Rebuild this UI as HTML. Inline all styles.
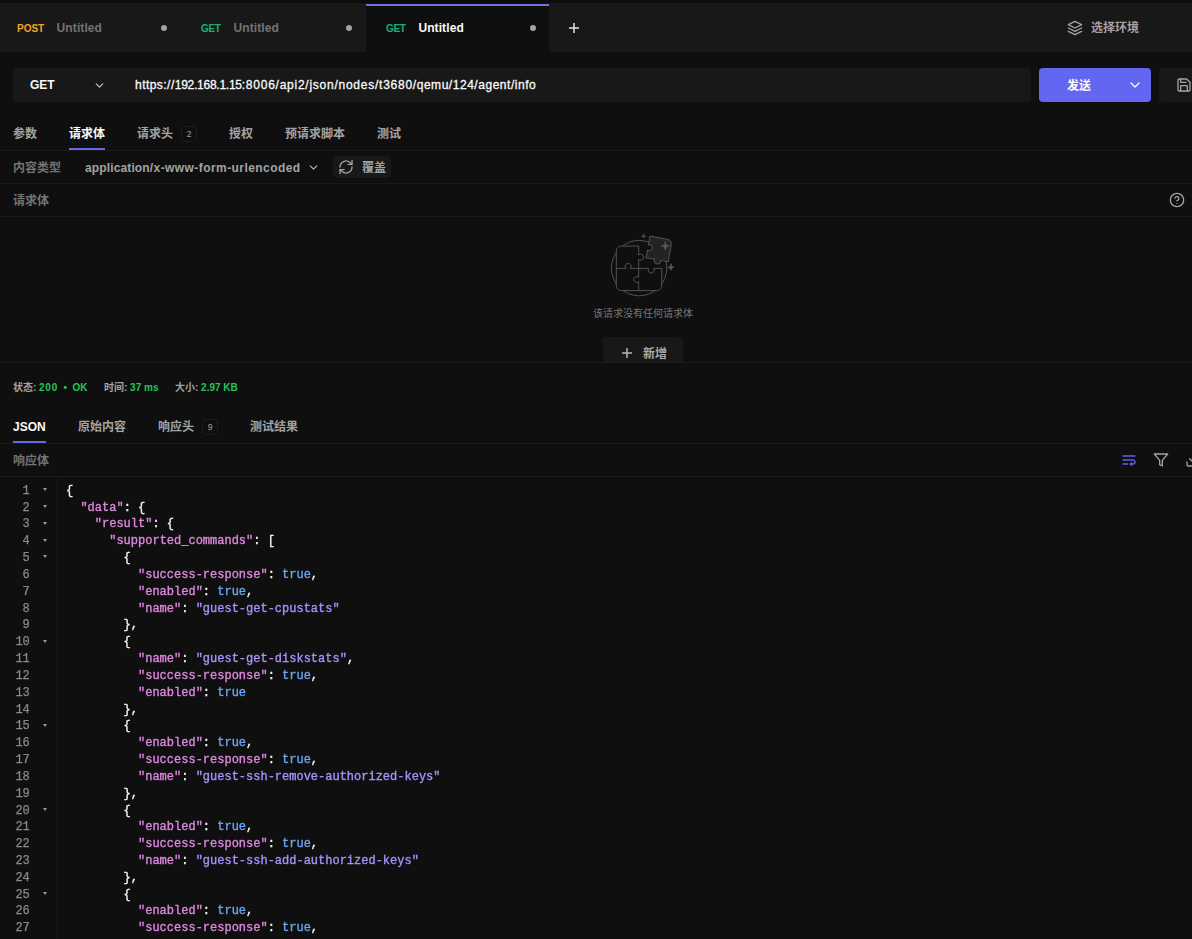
<!DOCTYPE html>
<html lang="zh-CN">
<head>
<meta charset="utf-8">
<title>Hoppscotch</title>
<style>
*{box-sizing:border-box;margin:0;padding:0}
html,body{width:1192px;height:939px;overflow:hidden;background:#0f0f0f}
body{position:relative;font-family:"Liberation Sans","Noto Sans CJK SC",sans-serif;font-size:12px;color:#a3a3a3;-webkit-font-smoothing:antialiased}
.abs{position:absolute;white-space:nowrap}
.t{position:absolute;white-space:nowrap;line-height:16px;height:16px}
.hl{position:absolute;left:0;width:1192px;height:1px;background:#1a1a1a}
.b{font-weight:700}
.m{font-weight:500}
.w{color:#fafafa}
.dim{color:#737373}
svg{position:absolute;overflow:visible}
/* top */
#topstrip{left:0;top:0;width:1192px;height:3px;background:#0c0c0c}
#tabbar{left:0;top:3px;width:1192px;height:49px;background:#181818}
#acttab{left:366px;top:3px;width:183px;height:49px;background:#0f0f0f}
#actline{left:366px;top:4px;width:183px;height:2px;background:#6f72dc}
.dot{position:absolute;width:6px;height:6px;border-radius:50%;background:#a3a3a3;top:25px}
.meth{font-size:10px;font-weight:700;top:21px}
.get{color:#1fae7b;letter-spacing:-.3px}
.tname{font-size:12px;font-weight:700;top:20px;color:#737373;letter-spacing:.1px}
.tname.w{color:#fafafa}
/* url row */
#urlbox{left:13px;top:68px;width:1018px;height:34px;background:#181818;border-radius:4px}
#send{left:1039px;top:68px;width:112px;height:34px;background:#6366f1;border-radius:4px}
#save{left:1159px;top:68px;width:60px;height:34px;background:#181818;border-radius:4px}
/* code */
#code{left:0;top:477px;width:1192px;height:462px;background:#0f0f0f;overflow:hidden}
#gutline{left:57px;top:477px;width:1px;height:462px;background:#1a1a1a}
#codewrap{position:absolute;left:0;top:0;width:1192px;height:939px;will-change:transform;pointer-events:none}
.ln,.cl{position:absolute;font-family:"Liberation Mono",monospace;font-size:12px;line-height:16.8px;height:16.8px;white-space:pre}
.ln{left:0;width:29.8px;text-align:right;color:#8a8a8a;-webkit-text-stroke:.25px #8a8a8a}
.cl{left:66px;color:#f0f0f0;-webkit-text-stroke:.35px}
.k{color:#dd88de}
.s{color:#a990fb}
.v{color:#6aa6ee}
.fold{position:absolute;left:42.6px;width:0;height:0;border-left:2.4px solid transparent;border-right:2.4px solid transparent;border-top:3.4px solid #999}
</style>
</head>
<body>
<div class="abs" id="topstrip"></div>
<div class="abs" id="tabbar"></div>
<div class="abs" id="acttab"></div>
<div class="abs" id="actline"></div>

<!-- request tabs -->
<div class="t meth" style="left:17px;color:#efa920">POST</div>
<div class="t tname" style="left:56.6px">Untitled</div>
<div class="dot" style="left:161px"></div>
<div class="t meth get" style="left:201px">GET</div>
<div class="t tname" style="left:233.5px">Untitled</div>
<div class="dot" style="left:346px"></div>
<div class="t meth get" style="left:386px">GET</div>
<div class="t tname w" style="left:418.4px">Untitled</div>
<div class="dot" style="left:530px"></div>
<svg id="plus" style="left:568px;top:22px" width="12" height="12" viewBox="0 0 12 12"><path d="M6 1v10M1 6h10" stroke="#e5e5e5" stroke-width="1.5" fill="none"/></svg>

<!-- environment -->
<svg id="layers" style="left:1067px;top:20px" width="16" height="16" viewBox="0 0 24 24" fill="none" stroke="#a3a3a3" stroke-width="2" stroke-linecap="round" stroke-linejoin="round"><path d="M12 2 2 7l10 5 10-5-10-5z"/><path d="m2 12 10 5 10-5"/><path d="m2 17 10 5 10-5"/></svg>
<div class="t b" style="left:1091px;top:20px">选择环境</div>

<!-- url row -->
<div class="abs" id="urlbox"></div>
<div class="t b w" id="urlmeth" style="left:30px;top:77px">GET</div>
<svg id="chev1" style="left:92.7px;top:78.5px" width="13" height="13" viewBox="0 0 24 24" fill="none" stroke="#c4c4c4" stroke-width="2.2" stroke-linecap="round" stroke-linejoin="round"><path d="m6 9 6 6 6-6"/></svg>
<div class="t w" id="url" style="left:135px;top:77px;letter-spacing:.46px;-webkit-text-stroke:.3px #fafafa">https://<span style="letter-spacing:-.25px">192.168.1.15</span><span style="letter-spacing:.75px">:8006/api2/json/nodes/t3680</span><span style="letter-spacing:.535px">/qemu/124/agent/info</span></div>
<div class="abs" id="send"></div>
<div class="t b w" id="sendtxt" style="left:1067px;top:78px">发送</div>
<svg id="chev2" style="left:1126.5px;top:77px" width="16" height="16" viewBox="0 0 24 24" fill="none" stroke="#fafafa" stroke-width="2" stroke-linecap="round" stroke-linejoin="round"><path d="m6 9 6 6 6-6"/></svg>
<div class="abs" id="save"></div>
<svg id="saveic" style="left:1176px;top:77px" width="16" height="16" viewBox="0 0 24 24" fill="none" stroke="#a3a3a3" stroke-width="2" stroke-linecap="round" stroke-linejoin="round"><path d="M19 21H5a2 2 0 0 1-2-2V5a2 2 0 0 1 2-2h11l5 5v11a2 2 0 0 1-2 2z"/><path d="M17 21v-8H7v8"/><path d="M7 3v5h8"/></svg>

<!-- request sub tabs -->
<div class="t b" style="left:13px;top:126px">参数</div>
<div class="t b w" style="left:69px;top:126px">请求体</div>
<div class="abs" style="left:69px;top:148px;width:36px;height:2px;background:#6669e4"></div>
<div class="t b" style="left:137px;top:126px">请求头</div>
<div class="abs" id="badge1" style="left:181px;top:126px;width:16px;height:16px;border:1px solid #1d1d1d;border-radius:4px"></div>
<div class="t" style="left:181px;top:126px;width:16px;text-align:center;font-size:8.5px;color:#a3a3a3">2</div>
<div class="t b" style="left:229px;top:126px">授权</div>
<div class="t b" style="left:285px;top:126px">预请求脚本</div>
<div class="t b" style="left:377px;top:126px">测试</div>
<div class="hl" style="top:150px"></div>

<!-- content type row -->
<div class="t b dim" style="left:13px;top:160px">内容类型</div>
<div class="t b" id="ctype" style="left:85px;top:160px;letter-spacing:.43px"><span style="letter-spacing:.13px">application</span>/x-www-form-urlencoded</div>
<svg id="chev3" style="left:307px;top:160.8px" width="13" height="13" viewBox="0 0 24 24" fill="none" stroke="#b4b4b4" stroke-width="2.2" stroke-linecap="round" stroke-linejoin="round"><path d="m6 9 6 6 6-6"/></svg>
<div class="abs" id="override" style="left:333px;top:156px;width:58px;height:22px;background:#181818;border-radius:4px"></div>
<svg id="refresh" style="left:338px;top:159px" width="16" height="16" viewBox="0 0 24 24" fill="none" stroke="#a3a3a3" stroke-width="2" stroke-linecap="round" stroke-linejoin="round"><path d="M21 2v6h-6"/><path d="M3 12a9 9 0 0 1 15-6.7L21 8"/><path d="M3 22v-6h6"/><path d="M21 12a9 9 0 0 1-15 6.7L3 16"/></svg>
<div class="t b" style="left:362px;top:160px">覆盖</div>
<div class="hl" style="top:183px"></div>

<!-- body label row -->
<div class="t b dim" style="left:13px;top:193px">请求体</div>
<svg id="help" style="left:1169px;top:192px" width="16" height="16" viewBox="0 0 24 24" fill="none" stroke="#a3a3a3" stroke-width="2" stroke-linecap="round" stroke-linejoin="round"><circle cx="12" cy="12" r="10"/><path d="M9.09 9a3 3 0 0 1 5.83 1c0 2-3 3-3 3"/><path d="M12 17h.01"/></svg>
<div class="hl" style="top:216px"></div>

<!-- empty state -->
<svg id="puzzle" style="left:592px;top:225px" width="100" height="80" viewBox="0 0 100 80" fill="none" stroke="#525252" stroke-width="1" stroke-linejoin="round" stroke-linecap="round">
<circle cx="47.1" cy="43.1" r="27.7"/>
<path d="M46.7 21.1H29.3a5 5 0 0 0-5 5V60.6a5 5 0 0 0 5 5H64.8a5 5 0 0 0 5-5V43.4H61.7A3 3 0 1 1 56.7 43.4H46.7" fill="#0f0f0f"/>
<path d="M46.7 21.1V29.9A3 3 0 1 1 46.7 34.3V52.3A3 3 0 1 0 46.7 56.7V65.6"/>
<path d="M24.3 43.4H34A3 3 0 1 1 38.4 43.4H46.7"/>
<g transform="translate(57.9 11.1) rotate(10)"><path d="M0 0H17.5a5 5 0 0 1 5 5V22H15A3.3 3.3 0 1 1 8.6 22H0V14.2A3 3 0 1 0 0 8.8Z" fill="#232323"/></g>
<path d="M73.3 16.9Q73.3 20.9 77.3 20.9Q73.3 20.9 73.3 24.9Q73.3 20.9 69.3 20.9Q73.3 20.9 73.3 16.9Z" fill="#5a5a5a" stroke="#5a5a5a" stroke-width=".8"/>
<path d="M79 39.2Q79 42.2 82 42.2Q79 42.2 79 45.2Q79 42.2 76 42.2Q79 42.2 79 39.2Z" fill="#5a5a5a" stroke="#5a5a5a" stroke-width=".8"/>
<path d="M51.7 9.2Q51.7 11.2 53.7 11.2Q51.7 11.2 51.7 13.2Q51.7 11.2 49.7 11.2Q51.7 11.2 51.7 9.2Z" fill="#5a5a5a" stroke="#5a5a5a" stroke-width=".5"/>
</svg>
<div class="t" style="left:543px;top:306px;width:200px;text-align:center;font-size:10px;color:#777">该请求没有任何请求体</div>
<div class="abs" id="addbtn" style="left:603px;top:337px;width:80px;height:26px;background:#181818;border-radius:4px 4px 0 0"></div>
<svg id="plus2" style="left:621px;top:347px" width="12" height="12" viewBox="0 0 12 12"><path d="M6 1v10M1 6h10" stroke="#b8b8b8" stroke-width="1.5" fill="none"/></svg>
<div class="t b" style="left:643px;top:346px;color:#ababab">新增</div>
<div class="hl" style="top:362px;background:#1a1a1a"></div>

<!-- status -->
<div class="t b" id="status" style="left:13px;top:380px;font-size:10px">状态: <span style="color:#22c55e"><span style="letter-spacing:.7px">200</span> &nbsp;•&nbsp; OK</span></div>
<div class="t b" id="time" style="left:104px;top:380px;font-size:10px">时间: <span style="color:#22c55e">37 ms</span></div>
<div class="t b" id="size" style="left:175px;top:380px;font-size:10px">大小: <span style="color:#22c55e">2.97 KB</span></div>

<!-- response tabs -->
<div class="t b w" style="left:13px;top:419px">JSON</div>
<div class="abs" style="left:13px;top:441px;width:33px;height:2px;background:#6669e4"></div>
<div class="t b" style="left:78px;top:419px">原始内容</div>
<div class="t b" style="left:158px;top:419px">响应头</div>
<div class="abs" id="badge2" style="left:202px;top:419px;width:16px;height:16px;border:1px solid #1d1d1d;border-radius:4px"></div>
<div class="t" style="left:202px;top:419px;width:16px;text-align:center;font-size:8.5px;color:#a3a3a3">9</div>
<div class="t b" style="left:250px;top:419px">测试结果</div>
<div class="hl" style="top:443px"></div>

<div class="t b dim" style="left:13px;top:453px">响应体</div>
<svg id="wrapic" style="left:1121px;top:452px" width="16" height="16" viewBox="0 0 24 24" fill="none" stroke="#5d60e4" stroke-width="2" stroke-linecap="round" stroke-linejoin="round"><path d="M3 6h18"/><path d="M3 12h15a3 3 0 1 1 0 6h-4"/><path d="m16 16-2 2 2 2"/><path d="M3 18h7"/></svg>
<svg id="filteric" style="left:1153px;top:452px" width="16" height="16" viewBox="0 0 24 24" fill="none" stroke="#a3a3a3" stroke-width="2" stroke-linecap="round" stroke-linejoin="round"><path d="M22 3H2l8 9.46V19l4 2v-8.54L22 3z"/></svg>
<svg id="dlic" style="left:1185px;top:452px" width="16" height="16" viewBox="0 0 24 24" fill="none" stroke="#a3a3a3" stroke-width="2" stroke-linecap="round" stroke-linejoin="round"><path d="M21 15v4a2 2 0 0 1-2 2H5a2 2 0 0 1-2-2v-4"/><path d="m7 10 5 5 5-5"/><path d="M12 15V3"/></svg>
<div class="hl" style="top:476px"></div>

<div class="abs" id="gutline"></div>
<div id="codewrap">
<div class="ln" style="top:482.7px">1</div>
<div class="fold" style="top:488.1px"></div>
<div class="cl" style="top:482.7px">{</div>
<div class="ln" style="top:499.5px">2</div>
<div class="fold" style="top:504.9px"></div>
<div class="cl" style="top:499.5px">  <span class="k">"data"</span>: {</div>
<div class="ln" style="top:516.4px">3</div>
<div class="fold" style="top:521.8px"></div>
<div class="cl" style="top:516.4px">    <span class="k">"result"</span>: {</div>
<div class="ln" style="top:533.2px">4</div>
<div class="fold" style="top:538.6px"></div>
<div class="cl" style="top:533.2px">      <span class="k">"supported_commands"</span>: [</div>
<div class="ln" style="top:550.0px">5</div>
<div class="fold" style="top:555.4px"></div>
<div class="cl" style="top:550.0px">        {</div>
<div class="ln" style="top:566.9px">6</div>
<div class="cl" style="top:566.9px">          <span class="k">"success-response"</span>: <span class="v">true</span>,</div>
<div class="ln" style="top:583.7px">7</div>
<div class="cl" style="top:583.7px">          <span class="k">"enabled"</span>: <span class="v">true</span>,</div>
<div class="ln" style="top:600.5px">8</div>
<div class="cl" style="top:600.5px">          <span class="k">"name"</span>: <span class="s">"guest-get-cpustats"</span></div>
<div class="ln" style="top:617.3px">9</div>
<div class="cl" style="top:617.3px">        },</div>
<div class="ln" style="top:634.2px">10</div>
<div class="fold" style="top:639.6px"></div>
<div class="cl" style="top:634.2px">        {</div>
<div class="ln" style="top:651.0px">11</div>
<div class="cl" style="top:651.0px">          <span class="k">"name"</span>: <span class="s">"guest-get-diskstats"</span>,</div>
<div class="ln" style="top:667.8px">12</div>
<div class="cl" style="top:667.8px">          <span class="k">"success-response"</span>: <span class="v">true</span>,</div>
<div class="ln" style="top:684.7px">13</div>
<div class="cl" style="top:684.7px">          <span class="k">"enabled"</span>: <span class="v">true</span></div>
<div class="ln" style="top:701.5px">14</div>
<div class="cl" style="top:701.5px">        },</div>
<div class="ln" style="top:718.3px">15</div>
<div class="fold" style="top:723.7px"></div>
<div class="cl" style="top:718.3px">        {</div>
<div class="ln" style="top:735.1px">16</div>
<div class="cl" style="top:735.1px">          <span class="k">"enabled"</span>: <span class="v">true</span>,</div>
<div class="ln" style="top:752.0px">17</div>
<div class="cl" style="top:752.0px">          <span class="k">"success-response"</span>: <span class="v">true</span>,</div>
<div class="ln" style="top:768.8px">18</div>
<div class="cl" style="top:768.8px">          <span class="k">"name"</span>: <span class="s">"guest-ssh-remove-authorized-keys"</span></div>
<div class="ln" style="top:785.6px">19</div>
<div class="cl" style="top:785.6px">        },</div>
<div class="ln" style="top:802.5px">20</div>
<div class="fold" style="top:807.9px"></div>
<div class="cl" style="top:802.5px">        {</div>
<div class="ln" style="top:819.3px">21</div>
<div class="cl" style="top:819.3px">          <span class="k">"enabled"</span>: <span class="v">true</span>,</div>
<div class="ln" style="top:836.1px">22</div>
<div class="cl" style="top:836.1px">          <span class="k">"success-response"</span>: <span class="v">true</span>,</div>
<div class="ln" style="top:853.0px">23</div>
<div class="cl" style="top:853.0px">          <span class="k">"name"</span>: <span class="s">"guest-ssh-add-authorized-keys"</span></div>
<div class="ln" style="top:869.8px">24</div>
<div class="cl" style="top:869.8px">        },</div>
<div class="ln" style="top:886.6px">25</div>
<div class="fold" style="top:892.0px"></div>
<div class="cl" style="top:886.6px">        {</div>
<div class="ln" style="top:903.4px">26</div>
<div class="cl" style="top:903.4px">          <span class="k">"enabled"</span>: <span class="v">true</span>,</div>
<div class="ln" style="top:920.3px">27</div>
<div class="cl" style="top:920.3px">          <span class="k">"success-response"</span>: <span class="v">true</span>,</div>
</div><!--/codewrap-->
</body>
</html>
